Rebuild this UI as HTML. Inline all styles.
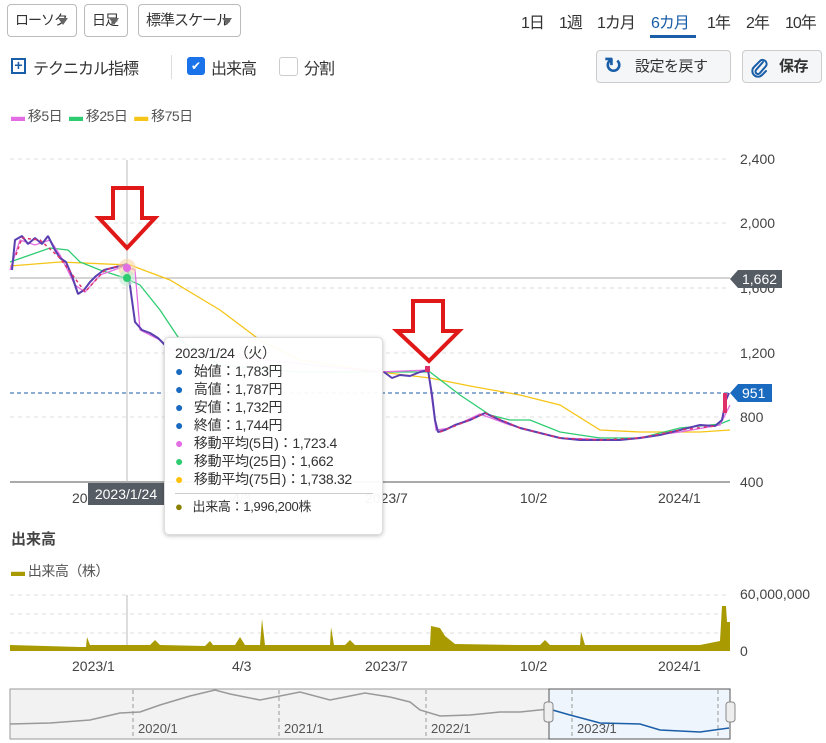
<!DOCTYPE html>
<html><head><meta charset="utf-8"><style>
body{margin:0;width:826px;height:743px;background:#fff;font-family:"Liberation Sans","Noto Sans CJK JP",sans-serif;color:#333;position:relative;overflow:hidden}
.a{position:absolute;white-space:nowrap}
.sel{position:absolute;top:4px;height:33px;border:1px solid #bbb;border-radius:4px;font-size:15px;line-height:31px;box-sizing:border-box;background:#fff;white-space:nowrap;overflow:hidden}
.sel b{position:absolute;left:7px;top:0;font-weight:normal;display:block;letter-spacing:-1px}
.sel i{position:absolute;z-index:2;right:8px;top:13px;width:0;height:0;border-left:5px solid transparent;border-right:5px solid transparent;border-top:7px solid #666}
.tab{position:absolute;top:9px;font-size:16px;color:#333;letter-spacing:-1px}
.btn{position:absolute;top:50px;height:33px;border:1px solid #ccc;border-radius:4px;background:#f5f6f7;font-size:15px;line-height:31px;box-sizing:border-box;white-space:nowrap;letter-spacing:-0.5px}
.t{font-size:14px;color:#555;letter-spacing:-0.5px}
</style></head><body>
<div class="sel" style="left:7px;width:70px"><b style="font-size:14px">ローソク</b><i></i></div>
<div class="sel" style="left:84px;width:44px"><b style="font-size:14px">日足</b><i></i></div>
<div class="sel" style="left:138px;width:103px"><b>標準スケール</b><i></i></div>
<div class="tab" style="left:521px">1日</div>
<div class="tab" style="left:559px">1週</div>
<div class="tab" style="left:597px">1カ月</div>
<div class="tab" style="left:651px;color:#1a5ea8">6カ月</div>
<div class="a" style="left:650px;top:35px;width:46px;height:3px;background:#1a5ea8"></div>
<div class="tab" style="left:707px">1年</div>
<div class="tab" style="left:746px">2年</div>
<div class="tab" style="left:785px">10年</div>

<div class="a" style="left:11px;top:58px;width:15px;height:16px;border:2px solid #1a5ea8;box-sizing:border-box;color:#1a5ea8;font-size:14px;line-height:11px;text-align:center;font-weight:bold">+</div>
<div class="a" style="left:33px;top:55px;font-size:16px;letter-spacing:-1px">テクニカル指標</div>
<div class="a" style="left:171px;top:55px;width:1px;height:24px;background:#ddd"></div>
<div class="a" style="left:187px;top:57px;width:18px;height:18px;background:#1a73e8;border-radius:3px;color:#fff;font-size:12px;text-align:center;line-height:18px">✔</div>
<div class="a" style="left:211px;top:55px;font-size:16px;letter-spacing:-1px">出来高</div>
<div class="a" style="left:279px;top:57px;width:17px;height:17px;border:1px solid #ccc;border-radius:3px"></div>
<div class="a" style="left:304px;top:55px;font-size:16px;letter-spacing:-1px">分割</div>
<div class="btn" style="left:596px;width:135px;padding-left:38px">設定を戻す</div>
<div class="a" style="left:604px;top:53px;font-size:22px;color:#1a5ea8;font-weight:bold">↻</div>
<div class="btn" style="left:742px;width:80px;padding-left:36px;font-weight:bold">保存</div>
<svg class="a" style="left:750px;top:56px" width="20" height="22" viewBox="0 0 20 22"><path d="M13,6 L6,14 a2.5,2.5 0 0 0 3.5,3.5 L16,10 a4,4 0 0 0 -5.5,-5.5 L4,11 a5.5,5.5 0 0 0 8,8 L16,15" fill="none" stroke="#1a5ea8" stroke-width="2" stroke-linecap="round"/></svg>

<div class="a t" style="left:11px;top:106px"><span style="color:#e36ee3">▬</span> 移5日 &nbsp;<span style="color:#2ecc71">▬</span> 移25日 &nbsp;<span style="color:#f5c518">▬</span> 移75日</div>

<svg class="a" style="left:0;top:0" width="826" height="743">
<g stroke="#ddd" stroke-dasharray="4,4">
<line x1="10" x2="730" y1="159" y2="159"/><line x1="10" x2="730" y1="223" y2="223"/><line x1="10" x2="730" y1="288" y2="288"/><line x1="10" x2="730" y1="353" y2="353"/><line x1="10" x2="730" y1="417" y2="417"/>
<line x1="10" x2="730" y1="595" y2="595"/><line x1="10" x2="730" y1="614" y2="614"/><line x1="10" x2="730" y1="633" y2="633"/>
</g>
<line x1="10" x2="730" y1="482" y2="482" stroke="#555"/>
<line x1="10" x2="730" y1="278" y2="278" stroke="#aaa"/>
<line x1="10" x2="730" y1="393" y2="393" stroke="#1a5ea8" stroke-dasharray="4,3"/>
<line x1="127" x2="127" y1="160" y2="482" stroke="#bbb"/>
<line x1="127" x2="127" y1="595" y2="651" stroke="#bbb"/>
<g font-size="14" fill="#444" font-family="Liberation Sans">
<text x="740" y="164">2,400</text><text x="740" y="228">2,000</text><text x="740" y="293">1,600</text><text x="740" y="358">1,200</text><text x="740" y="422">800</text><text x="740" y="487">400</text>
<text x="72" y="503">2023/1</text><text x="232" y="503">4/3</text><text x="365" y="503">2023/7</text><text x="520" y="503">10/2</text><text x="658" y="503">2024/1</text>
<text x="740" y="599">60,000,000</text><text x="740" y="656">0</text>
<text x="72" y="671">2023/1</text><text x="232" y="671">4/3</text><text x="365" y="671">2023/7</text><text x="520" y="671">10/2</text><text x="658" y="671">2024/1</text>
</g>
<polygon points="730,279 738,270 782,270 782,288 738,288" fill="#555c63"/>
<text x="742" y="284" font-size="14" fill="#fff">1,662</text>
<polygon points="730,393 738,384 772,384 772,402 738,402" fill="#1a6bc0"/>
<text x="742" y="398" font-size="14" fill="#fff">951</text>
<polyline fill="none" stroke="#f5c518" stroke-width="1.3" points="10,266 60,262 130,265 170,280 220,310 260,340 300,360 380,372 430,378 470,386 520,395 560,405 600,430 640,432 700,432 730,430"/>
<polyline fill="none" stroke="#2ecc71" stroke-width="1.3" points="10,262 30,255 50,248 68,250 80,262 100,270 125,278 140,285 160,310 180,340 220,365 300,372 400,372 430,372 460,395 490,415 510,420 530,420 560,432 600,438 640,438 680,428 720,424 730,420"/>
<polyline fill="none" stroke="#e36ee3" stroke-width="1.3" points="10,270 20,240 35,245 50,240 60,255 75,285 85,292 100,275 125,266 135,270 140,330 160,340 170,350 380,372 428,370 436,430 450,428 480,414 510,425 560,438 620,440 680,432 720,425 730,405"/>
<polyline fill="none" stroke="#5a3fb0" stroke-width="2" stroke-linejoin="bevel" points="12,270 15,240 22,236 28,244 35,238 42,244 48,236 55,250 60,258 66,262 72,276 78,294 84,290 90,282 96,276 104,270 112,268 120,266 127,264 135,322 142,330 150,333 158,338 165,345"/>
<polyline fill="none" stroke="#e0306a" stroke-width="1.5" stroke-dasharray="3,3" points="16,255 22,238 40,240 60,258 85,292 105,270 125,264"/>
<polyline fill="none" stroke="#5a3fb0" stroke-width="2" stroke-linejoin="bevel" points="384,372 392,378 400,375 410,376 420,372 428,370 432,395 435,420 438,432 445,430 455,425 470,420 485,413 500,420 520,428 540,433 560,438 580,440 600,440 620,440 640,438 660,435 680,430 700,425 715,426 722,420 726,400 729,393"/>
<polyline fill="none" stroke="#e0306a" stroke-width="1.5" stroke-dasharray="3,4" points="440,432 470,420 485,413 520,428 560,438 600,440 640,438 680,430 715,426"/>
<rect x="425" y="366" width="5" height="6" fill="#e0306a"/>
<rect x="723" y="393" width="4" height="20" fill="#e0306a"/>
<circle cx="127" cy="268" r="9" fill="#f9d3a5" opacity=".6"/><circle cx="127" cy="278" r="8" fill="#bfead0" opacity=".6"/>
<circle cx="127" cy="268" r="4" fill="#e36ee3"/><circle cx="127" cy="278" r="4" fill="#2ecc71"/>
<polygon points="113,188 142,188 142,218 155,218 127,248 99,218 113,218" fill="none" stroke="#e01818" stroke-width="4"/>
<polygon points="413,301 443,301 443,331 459,331 429,361 397,331 413,331" fill="none" stroke="#e01818" stroke-width="4"/>
<path fill="#a89a00" d="M10,651 L10,645 L80,647 L86,647 L87,637 L90,645 L150,645 L155,640 L160,645 L205,646 L210,641 L213,645 L235,645 L240,637 L245,645 L260,645 L262,619 L265,645 L300,645 L330,645 L331,627 L334,645 L345,645 L350,640 L355,645 L430,645 L431,626 L440,628 L445,636 L450,640 L455,644 L520,645 L540,645 L545,640 L550,645 L580,645 L581,632 L585,645 L650,645 L700,645 L720,641 L722,606 L726,606 L727,622 L730,622 L730,651 Z"/>
<rect x="10" y="689" width="539" height="50" fill="#f2f2f2" stroke="#999"/>
<rect x="549" y="689" width="181" height="50" fill="#eef5fc" stroke="#555"/>
<g stroke="#999" stroke-dasharray="4,3"><line x1="133" x2="133" y1="690" y2="739"/><line x1="279" x2="279" y1="690" y2="739"/><line x1="426" x2="426" y1="690" y2="739"/><line x1="572" x2="572" y1="690" y2="739"/><line x1="718" x2="718" y1="690" y2="739"/></g>
<polyline fill="none" stroke="#999" stroke-width="1.5" points="10,724 50,723 90,720 120,713 140,712 160,705 190,696 215,690 230,694 260,700 300,692 330,700 365,693 390,697 410,702 420,710 440,716 470,715 500,712 520,712 549,709"/>
<polyline fill="none" stroke="#1a5ea8" stroke-width="1.5" points="549,709 570,715 600,723 640,724 660,730 700,732 729,728"/>
<g font-size="13" fill="#555"><text x="138" y="733">2020/1</text><text x="284" y="733">2021/1</text><text x="431" y="733">2022/1</text><text x="577" y="733">2023/1</text></g>
<rect x="544" y="702" width="9" height="20" rx="3" fill="#eee" stroke="#888"/><rect x="726" y="702" width="9" height="20" rx="3" fill="#eee" stroke="#888"/>
</svg>
<div class="a" style="left:88px;top:483px;width:76px;height:22px;background:#555c63;color:#fff;font-size:14px;line-height:22px;text-align:center">2023/1/24</div>
<div class="a" style="left:164px;top:337px;width:219px;height:198px;background:rgba(255,255,255,.95);border:1px solid #ddd;border-radius:5px;box-shadow:0 1px 4px rgba(0,0,0,.25);font-size:14px;letter-spacing:-0.3px;line-height:18px;color:#333;box-sizing:border-box;padding:6px 0 0 10px">
<div>2023/1/24（火）</div>
<div><span style="color:#1a6bc0">●</span>&nbsp;&nbsp; 始値：1,783円</div>
<div><span style="color:#1a6bc0">●</span>&nbsp;&nbsp; 高値：1,787円</div>
<div><span style="color:#1a6bc0">●</span>&nbsp;&nbsp; 安値：1,732円</div>
<div><span style="color:#1a6bc0">●</span>&nbsp;&nbsp; 終値：1,744円</div>
<div><span style="color:#e36ee3">●</span>&nbsp;&nbsp; 移動平均(5日)：1,723.4</div>
<div><span style="color:#2ecc71">●</span>&nbsp;&nbsp; 移動平均(25日)：1,662</div>
<div><span style="color:#ffc107">●</span>&nbsp;&nbsp; 移動平均(75日)：1,738.32</div>
<div style="width:198px;height:1px;background:#ccc;margin:5px 0 4px"></div>
<div style="font-size:13px"><span style="color:#8a8000">●</span>&nbsp;&nbsp; 出来高：1,996,200株</div>
</div>
<div class="a" style="left:11px;top:528px;font-size:15px;font-weight:bold;color:#444">出来高</div>
<div class="a t" style="left:11px;top:561px"><span style="color:#a89a00">▬</span> 出来高（株）</div>
</body></html>
